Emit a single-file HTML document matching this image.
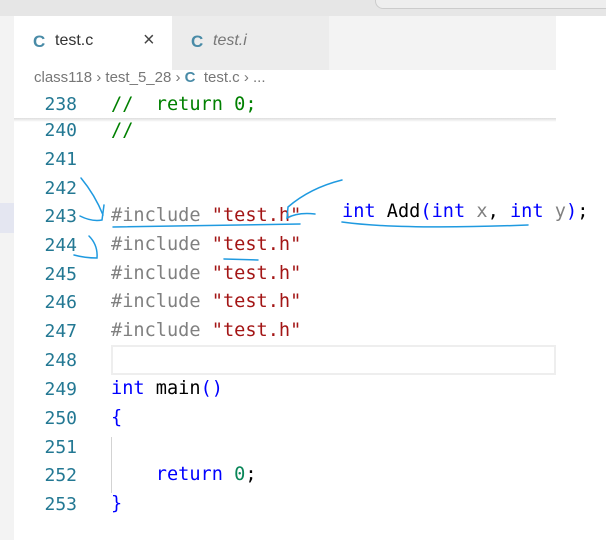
<!DOCTYPE html>
<html><head><style>
body{margin:0;width:606px;height:540px;overflow:hidden;background:#fff;font-family:"Liberation Sans",sans-serif;position:relative}
.a{position:absolute}
.mono{font-family:"DejaVu Sans Mono","Liberation Mono",monospace;font-size:18.6px;white-space:pre}
.ln{position:absolute;left:20px;width:57px;text-align:right;color:#237893;font-size:18px}
.code{position:absolute;left:111px}
.c{color:#008000}.k{color:#0000ff}.s{color:#a31515}.p{color:#808080}.f{color:#000}.n{color:#098658}
</style></head><body>
<div class="a" style="left:0;top:0;width:606px;height:16px;background:#e6e6e6"></div>
<div class="a" style="left:375px;top:0;width:231px;height:8px;border:1px solid #ccc;border-top:none;border-radius:0 0 0 8px;background:#eee"></div>
<div class="a" style="left:0;top:16px;width:14px;height:524px;background:#f3f3f3"></div>
<div class="a" style="left:14px;top:16px;width:542px;height:54px;background:#f3f3f3"></div>
<div class="a" style="left:14px;top:16px;width:158px;height:54px;background:#fff"></div>
<div class="a" style="left:172px;top:16px;width:157px;height:54px;background:#ececec"></div>
<div class="a" style="left:556px;top:16px;width:50px;height:524px;background:#fff"></div>
<div class="a" style="left:33px;top:32px;font-size:17px;font-weight:bold;color:#498ba7">C</div>
<div class="a" style="left:55px;top:32px;font-size:16px;color:#333">test.c</div>
<div class="a" style="left:143px;top:29px;font-size:20px;color:#444">×</div>
<div class="a" style="left:191px;top:32px;font-size:17px;font-weight:bold;color:#498ba7">C</div>
<div class="a" style="left:213px;top:32px;font-size:16px;color:#777;font-style:italic">test.i</div>
<div class="a" style="left:34px;top:69px;font-size:15px;color:#777">class118 › test_5_28 › <b style="color:#498ba7">C</b> &nbsp;test.c › ...</div>
<div class="a" style="left:14px;top:118px;width:542px;height:4px;background:linear-gradient(#ddd,#fff)"></div>
<div class="a" style="left:0;top:203px;width:14px;height:30px;background:#e4e6f1"></div>
<div class="a" style="left:111px;top:345px;width:441px;height:26px;border:2px solid #eee"></div>
<div class="a" style="left:111px;top:437px;width:1px;height:56px;background:#d3d3d3"></div>
<div class="mono">
<div class="ln" style="top:94px">238</div><div class="code c" style="top:94px">//  return 0;</div>
<div class="ln" style="top:120px">240</div><div class="code c" style="top:120px">//</div>
<div class="ln" style="top:149px">241</div>
<div class="ln" style="top:178px">242</div>
<div class="ln" style="top:206px">243</div><div class="code" style="top:205px"><span class="p">#include </span><span class="s">"test.h"</span></div>
<div class="a" style="left:342px;top:201px"><span class="k">int</span> <span class="f">Add</span><span class="k">(int</span> <span class="p">x</span><span class="f">,</span> <span class="k">int</span> <span class="p">y</span><span class="k">)</span><span class="f">;</span></div>
<div class="ln" style="top:235px">244</div><div class="code" style="top:234px"><span class="p">#include </span><span class="s">"test.h"</span></div>
<div class="ln" style="top:264px">245</div><div class="code" style="top:263px"><span class="p">#include </span><span class="s">"test.h"</span></div>
<div class="ln" style="top:292px">246</div><div class="code" style="top:291px"><span class="p">#include </span><span class="s">"test.h"</span></div>
<div class="ln" style="top:321px">247</div><div class="code" style="top:320px"><span class="p">#include </span><span class="s">"test.h"</span></div>
<div class="ln" style="top:350px">248</div>
<div class="ln" style="top:379px">249</div><div class="code" style="top:378px"><span class="k">int</span> <span class="f">main</span><span class="k">()</span></div>
<div class="ln" style="top:408px">250</div><div class="code k" style="top:407px">{</div>
<div class="ln" style="top:437px">251</div>
<div class="ln" style="top:465px">252</div><div class="code" style="top:464px">    <span class="k">return</span> <span class="n">0</span><span class="f">;</span></div>
<div class="ln" style="top:494px">253</div><div class="code k" style="top:493px">}</div>
</div>
<svg class="a" style="left:0;top:0" width="606" height="540" fill="none" stroke="#1f9ae0" stroke-width="1.5" stroke-linecap="round">
<path d="M81 178 Q95 195 103 215"/>
<path d="M80 216 Q92 222 102 220 L104 205"/>
<path d="M113 227 L300 224"/>
<path d="M342 180 Q310 188 288 207 L287 218 Q298 212 315 214"/>
<path d="M342 222 Q400 230 528 225"/>
<path d="M89 236 Q98 245 97 258 Q85 258 74 255"/>
<path d="M224 259 L258 260"/>
</svg>
</body></html>
